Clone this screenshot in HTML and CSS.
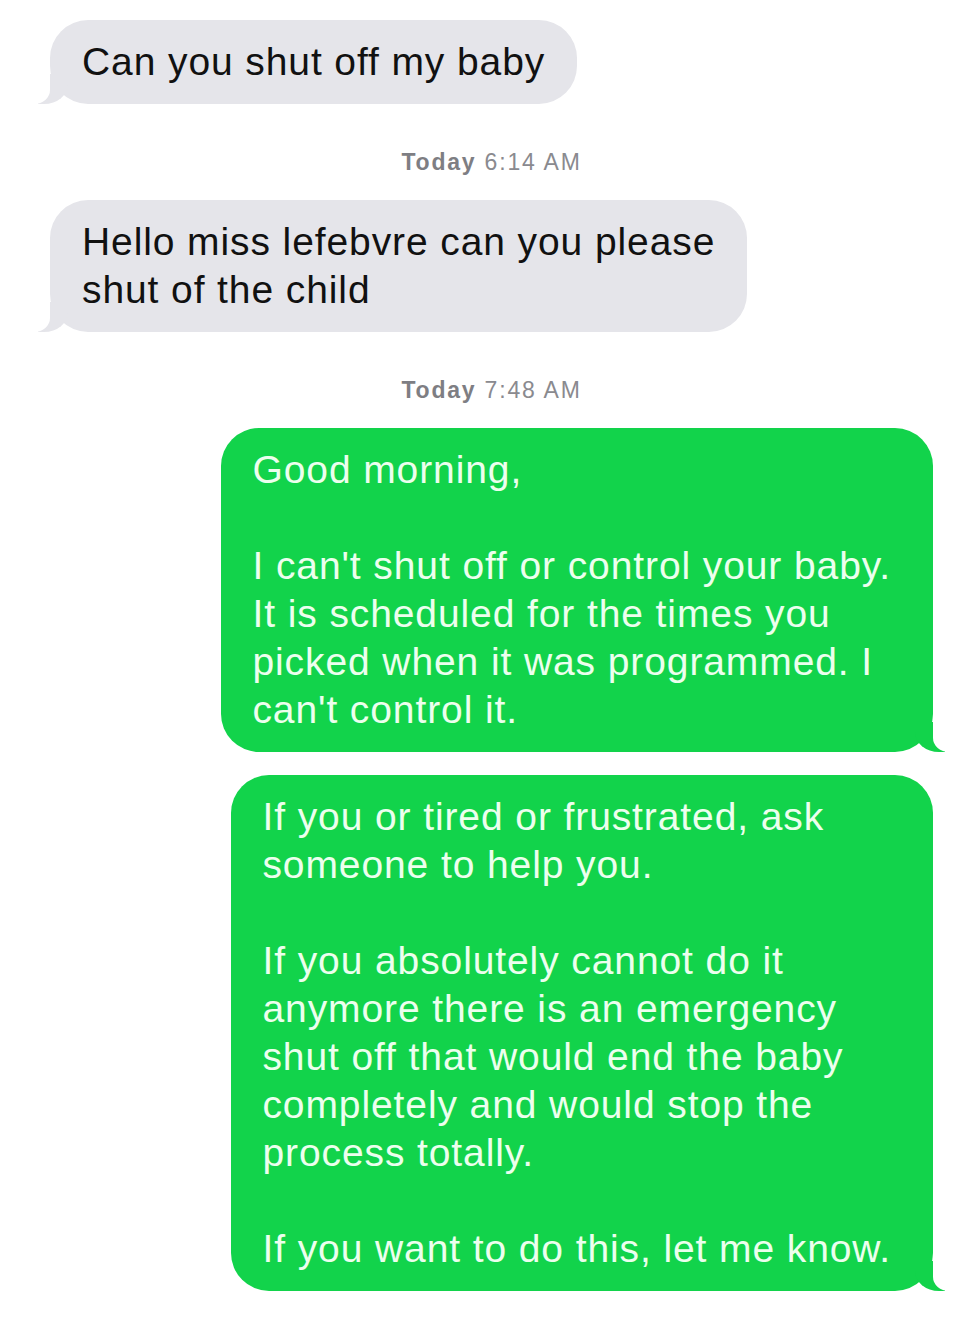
FILE: index.html
```html
<!doctype html>
<html lang=en>
	<head>
		<meta charset=utf-8>
		<title>Messages</title>

		<link rel="stylesheet" href="styles.css">
	</head>
	<body>
		<div id="thread">
			<div class="msg in">Can you shut off my baby</div>

			<div class="stamp"><b>Today</b> 6:14 AM</div>

			<div class="msg in">Hello miss lefebvre can you please<br>shut of the child</div>

			<div class="stamp"><b>Today</b> 7:48 AM</div>

			<div class="msg out first">
				Good morning,<br>
				<br>
				I can't shut off or control your baby.<br>
				It is scheduled for the times you<br>
				picked when it was programmed. I<br>
				can't control it.
			</div>

			<div class="msg out">
				If you or tired or frustrated, ask<br>
				someone to help you.<br>
				<br>
				If you absolutely cannot do it<br>
				anymore there is an emergency<br>
				shut off that would end the baby<br>
				completely and would stop the<br>
				process totally.<br>
				<br>
				If you want to do this, let me know.
			</div>
		</div>
	</body>
</html>
```

FILE: styles.css
```css
body
{
	margin: 0px;
	padding: 0px;
	background-color: #ffffff;
	font-family: 'Liberation Sans', Arial, sans-serif;
}

#thread
{
	display: flex;
	flex-direction: column;
	padding: 20px 47px 26px 50px;
}

.msg
{
	position: relative;
	width: fit-content;
	white-space: nowrap;
	font-size: 39px;
	line-height: 48px;
	letter-spacing: 0.9px;
	border-radius: 38px;
}

.msg.in
{
	align-self: flex-start;
	background-color: #e5e5ea;
	color: #111111;
	padding: 18px 32px 18px 32px;
}

.msg.out
{
	align-self: flex-end;
	background-color: #12d34b;
	color: #ecffee;
	padding: 18px 42px 18px 31px;
}

.msg.first
{
	margin-bottom: 23px;
}

/* bubble tails */
.msg::before,
.msg::after
{
	content: "";
	position: absolute;
	bottom: 0px;
	height: 30px;
}

.msg.in::before
{
	left: -12px;
	width: 30px;
	background-color: #e5e5ea;
	border-bottom-right-radius: 24px 20px;
}

.msg.in::after
{
	left: -26px;
	width: 26px;
	background-color: #ffffff;
	border-bottom-right-radius: 16px 14px;
}

.msg.out::before
{
	right: -12px;
	width: 30px;
	background-color: #12d34b;
	border-bottom-left-radius: 24px 20px;
}

.msg.out::after
{
	right: -26px;
	width: 26px;
	background-color: #ffffff;
	border-bottom-left-radius: 16px 14px;
}

.stamp
{
	text-align: center;
	font-size: 23px;
	line-height: 30px;
	letter-spacing: 1.8px;
	color: #8a8a8f;
	margin: 43px 0px 23px 0px;
}

.stamp b
{
	font-weight: bold;
	color: #7e7e83;
}
```
